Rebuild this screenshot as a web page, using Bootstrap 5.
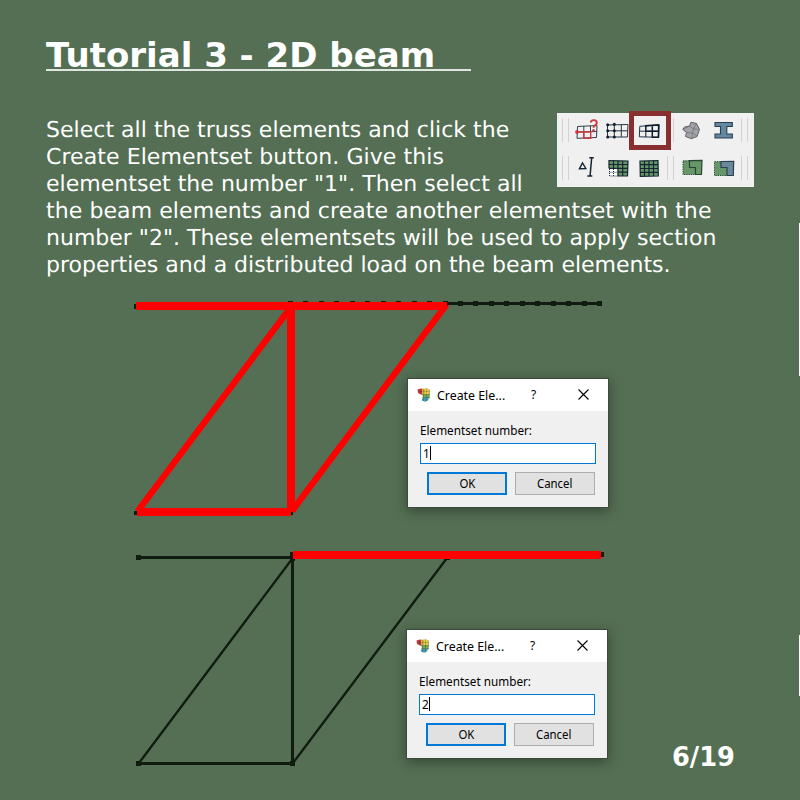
<!DOCTYPE html>
<html lang="en">
<head>
<meta charset="utf-8">
<title>Tutorial 3 - 2D beam</title>
<link href="https://cdn.jsdelivr.net/npm/bootstrap@5.3.0/dist/css/bootstrap.min.css" rel="stylesheet">
<style>
body{background:#546f54;font-family:"DejaVu Sans",sans-serif;color:#fff}
.slide{width:800px;height:800px}
.slide-head{height:113px;padding:35px 0 0 46px}
.slide-title{width:425px;height:36px;font-size:34px;line-height:40px;font-weight:700;border-bottom:2px solid #dfe5df;white-space:nowrap}
.intro{height:177px;padding:0 46px;font-size:22px;line-height:27px;text-rendering:geometricPrecision}
.intro p{padding-top:3.500px;white-space:nowrap}
.track-1{letter-spacing:.03px}.track-2{letter-spacing:.08px}
.toolbar{width:197px;height:74px;background:#f0f0f0;padding-top:5px}
.tool-row{display:grid;grid-template-columns:17px 26px 36px 26px 17px 25px 37px 7px;height:24px;margin-bottom:14px;justify-items:center}
.tool-row svg{width:28px;height:24px;overflow:visible}
.grip{width:7px;height:24px;border:solid #d2d2d2;border-width:0 1px}
.picked{left:72px;top:-2px;width:42px;height:39px;border:5px solid #8a2f30}
.figure-a{height:250px}.figure-b{height:260px}
.dlg{width:202px;height:130px;border:1px solid #3b4a3b;background:#f0f0f0;color:#000;font-family:"Noto Sans","Open Sans",sans-serif;font-size:12px;line-height:16px;box-shadow:0 3px 12px rgba(0,0,0,.38)}
.dlg-a{left:407px;top:88px}.dlg-b{left:406px;top:89px}
.dlg-bar{height:32px;background:#fff;padding-left:9px}
.dlg-name{width:100px;padding:2px 0 0 6px}
.dlg-name .narrow{transform:scaleX(1.03)}
.dlg-body{padding:11px 12px 0}
.dlg-label{height:21px;line-height:18px}
.dlg-input{height:21px;border:1px solid #0078d7;background:#fff;padding:2px 0 0 2px}
.caret{width:1px;height:14px;background:#000}
.dlg-actions{padding-right:1px}
.dlg-btn{width:80px;height:23px;border:1px solid #adadad;background:#e1e1e1}
.dlg-btn.main{border:2px solid #0078d7}
.dlg-close{margin-right:16px}
.narrow{display:inline-block;transform:scaleX(.977);transform-origin:left;white-space:nowrap}
.dlg-btn .narrow{transform:scaleX(.95);transform-origin:center}
.page-no{right:65px;bottom:27px;font-size:25.700px;line-height:32px;font-weight:700}
.edge{right:0;width:1px;background:#fff}
.edge-a{top:223px;height:153px}.edge-b{top:635px;height:61px}
</style>
<script src="https://cdn.jsdelivr.net/npm/bootstrap@5.3.0/dist/js/bootstrap.bundle.min.js"></script>
</head>
<body>
<svg width="0" height="0" class="position-absolute">
<defs>
<symbol id="app" viewBox="0 0 14 14">
<path d="M.5 1.500 4 .5 7 1v6L4 6.500 1 5z" fill="#c8383c"/><path d="M5 1 10 .3l2.500 1.200V7H5z" fill="#d7b83c"/><path d="M8 1h3l1.500 1v5H8z" fill="#e4cf48"/><path d="M5.500 6.500 12.500 6v4L6 12z" fill="#74a852"/><path d="M5 10.500 12 9.500 11 12.500 8 13.700 5 12.500z" fill="#3f9ab5"/>
<path d="M1 3.500h11.500M4.500 6.500h8M5 9.500h7.500M3.500 1v5M6.500 1v12M9.500 .5v13M12.500 1.500v9" stroke="#333" stroke-width=".4" fill="none" opacity=".6"/>
</symbol>
</defs>
</svg>
<main class="slide position-relative overflow-hidden">
<header class="slide-head"><h1 class="slide-title m-0">Tutorial 3 - 2D beam</h1></header>
<section class="intro">
<div class="toolbar float-end position-relative">
<div class="tool-row">
<span class="grip"></span>
<svg viewBox="0 0 28 24"><g fill="none" stroke="#33404c"><path d="M4.500 8.500 24 7.500 23.500 19.500 4 20.300zM4.500 14 24 13.500M10.800 8v12M17.500 8v12"/><path d="M10.800 14h6.900v6.300h-6.900zM4 14h7" stroke="#d03a3c" stroke-width="1.400"/></g><circle cx="4" cy="14" r="1.900" fill="#d03a3c"/><path d="M17.800 4.500c.4-3.400 6-3 6 .3 0 2.500-3.200 2.300-3.300 5" fill="none" stroke="#cc3b3d" stroke-width="1.900"/><circle cx="20.500" cy="12.300" r="1.200" fill="#cc3b3d"/></svg>
<svg viewBox="0 0 28 24"><path d="M3.500 7 24 6.500 23.500 19 3.500 19zM3.500 12.800H24M10.300 6.500v12.500M17.300 6.500v12.500" fill="none" stroke="#263442"/><g fill="#0e1d2c"><circle cx="3.700" cy="6.700" r="1.500"/><circle cx="3.700" cy="12.700" r="1.500"/><circle cx="3.700" cy="19" r="1.500"/><circle cx="10.300" cy="6.200" r="1.500"/><circle cx="10.300" cy="12.700" r="1.500"/><circle cx="10.300" cy="19" r="1.500"/></g></svg>
<svg viewBox="0 0 28 24"><path d="M4.800 8.300 24 7 23.700 19.300 4.300 18.800zM4.500 13.200h19" fill="none" stroke="#263442"/><path d="M10.800 13.200V7.700L23.700 6.900 23.400 19.300H17.300V7.500M10.800 13.200H23.500" fill="none" stroke="#0e1d2c" stroke-width="1.500"/><path d="M10.800 13v6" stroke="#0e1d2c"/></svg>
<span class="grip"></span>
<svg viewBox="0 0 28 24"><path d="M13 4.200 18.500 5.500 21.500 11.500 19 18.500 13.500 20.700 7.500 18.500 8.500 14.500 4.800 11.500 6.500 9 11.500 8z" fill="#a3a4a7" stroke="#55585e" stroke-width=".9"/><path d="M11.500 8 15.500 11 18.500 5.500M15.500 11 21 11.500M15.500 11 14.500 15 19 18M14.500 15 8.500 14.500M14.500 15 13.500 20.500M4.800 11.500 11.500 8" fill="none" stroke="#6a6d72" stroke-width=".7"/></svg>
<svg viewBox="0 0 28 24"><path d="M6 4.500h17.300v4h-5.500V16h5.500v4H6v-4h5.500V8.500H6z" fill="#6289a0" stroke="#2b3d4c" stroke-width="1.100"/></svg>
<span class="grip"></span>
</div>
<div class="tool-row">
<span class="grip"></span>
<svg viewBox="0 0 28 24"><path d="M6.500 12.700 9.500 7 12.800 12.500z" fill="none" stroke="#152433" stroke-width="1.400"/><path d="M16.300 1.700h4.500M18.700 1.700 17 20.500M14.300 20h5" fill="none" stroke="#152433" stroke-width="1.500"/></svg>
<svg viewBox="0 0 28 24"><path d="M5 4.300 24 5 23.500 20H5z" fill="#659665"/><path d="M5 12.500h8.700V20H5z" fill="#fff"/><path d="M5 12.300V4.500L24 5 23.500 20H14V12.300H5M5 8.500h19M14 12.300h10M14 16.200h10M9.500 4.500v8M14 4.500v8M18.700 4.500V20" fill="none" stroke="#152433" stroke-width="1.200"/><path d="M5.500 13v7h8M9.500 13v7M5.500 16.300h8" fill="none" stroke="#263442" stroke-dasharray="1 1"/></svg>
<svg viewBox="0 0 28 24"><path d="M5 5 23 4.500 23.300 20 5.300 20.300zM5 8.700h18M5 12.500h18M5 16.300h18M9.500 4.500v15.500M14 4.500v15.500M18.500 4.500v15.500" fill="#659665" stroke="#152433" stroke-width="1.200"/></svg>
<span class="grip"></span>
<svg viewBox="0 0 28 24"><path d="M5 4.800 24 4.300 23.500 18.500H5z" fill="#679768"/><path d="M11.500 4.700 24 4.300 23.500 18.500H17.500V11.500H11.500z" fill="none" stroke="#294536" stroke-width="1.200"/><path d="M11 4.800H5v13.700h12" fill="none" stroke="#294536" stroke-dasharray="1.300 1"/></svg>
<svg viewBox="0 0 28 24"><path d="M5.500 5.500h7v6h6v8h-13z" fill="#679768"/><path d="M12 5.500 24.700 5.300 24.300 19.500H18V11.500H12z" fill="#6b879c" stroke="#294050" stroke-width="1.200"/><path d="M11.500 5.700h-6v13.800H18" fill="none" stroke="#294536" stroke-dasharray="1.300 1"/></svg>
<span class="grip"></span>
</div>
<div class="picked position-absolute"></div>
</div>
<p class="m-0"><span class="track-1">Select all the truss elements and click the</span><br><span class="track-2">Create Elementset button. Give this</span><br><span class="track-1">elementset the number "1". Then select all</span><br><span class="track-2">the beam elements and create another elementset with the</span><br>number "2". These elementsets will be used to apply section<br>properties and a distributed load on the beam elements.</p>
</section>
<section class="figure-a position-relative">
<svg class="d-block" width="800" height="250" viewBox="0 290 800 250">
<g fill="#101c10" shape-rendering="crispEdges">
<path d="M446 302h156v3H446z"/>
<path d="M134 304h5v5h-5zM134 511h5v4h-5zM288 512h5v3h-5z"/>
<path d="M288 303.500H602" fill="none" stroke="#101c10" stroke-width="5" stroke-dasharray="5 10.450"/>
</g>
<g fill="none" stroke="#f00">
<path d="M136 306H447M291 306V512M137 512H291" stroke-width="8" shape-rendering="crispEdges"/>
<path d="M137.500 511.500 291 307M292 511 446.500 304.500" stroke-width="6.300"/>
</g>
</svg>
<div class="dlg dlg-a position-absolute">
<div class="dlg-bar d-flex align-items-center"><svg width="14" height="14"><use href="#app"/></svg><span class="dlg-name"><span class="narrow">Create Ele...</span></span><span>?</span><svg class="dlg-close ms-auto" width="18" height="12" viewBox="0 0 18 12"><path d="M4.500 .5l10 10m0-10-10 10" stroke="#000" stroke-width="1.100"/></svg></div>
<div class="dlg-body"><div class="dlg-label"><span class="narrow">Elementset number:</span></div>
<div class="dlg-input d-flex"><span class="narrow">1</span><i class="caret"></i></div>
<div class="dlg-actions d-flex gap-2 justify-content-end mt-2"><div class="dlg-btn main d-flex align-items-center justify-content-center"><span class="narrow">OK</span></div><div class="dlg-btn d-flex align-items-center justify-content-center"><span class="narrow">Cancel</span></div></div></div>
</div>
</section>
<section class="figure-b position-relative">
<svg class="d-block" width="800" height="260" viewBox="0 540 800 260">
<g fill="#101c10" shape-rendering="crispEdges">
<path d="M138 556h154v3H138zM291 552h3v212h-3zM138 762h155v3H138zM136 555h5v5h-5zM136 761h5v5h-5zM290 761h5v5h-5zM290 552h5v9h-5zM601 552h3v5h-3zM444 558h6v2h-6z"/>
</g>
<path d="M139 763 292 559M293 763 447 558" stroke="#101c10" stroke-width="2.300"/>
<path d="M293 551h308v8H293z" fill="#f00"/>
</svg>
<div class="dlg dlg-b position-absolute">
<div class="dlg-bar d-flex align-items-center"><svg width="14" height="14"><use href="#app"/></svg><span class="dlg-name"><span class="narrow">Create Ele...</span></span><span>?</span><svg class="dlg-close ms-auto" width="18" height="12" viewBox="0 0 18 12"><path d="M4.500 .5l10 10m0-10-10 10" stroke="#000" stroke-width="1.100"/></svg></div>
<div class="dlg-body"><div class="dlg-label"><span class="narrow">Elementset number:</span></div>
<div class="dlg-input d-flex"><span class="narrow">2</span><i class="caret"></i></div>
<div class="dlg-actions d-flex gap-2 justify-content-end mt-2"><div class="dlg-btn main d-flex align-items-center justify-content-center"><span class="narrow">OK</span></div><div class="dlg-btn d-flex align-items-center justify-content-center"><span class="narrow">Cancel</span></div></div></div>
</div>
</section>
<div class="page-no position-absolute">6/19</div>
<div class="edge edge-a position-absolute"></div><div class="edge edge-b position-absolute"></div>
</main>
</body>
</html>
